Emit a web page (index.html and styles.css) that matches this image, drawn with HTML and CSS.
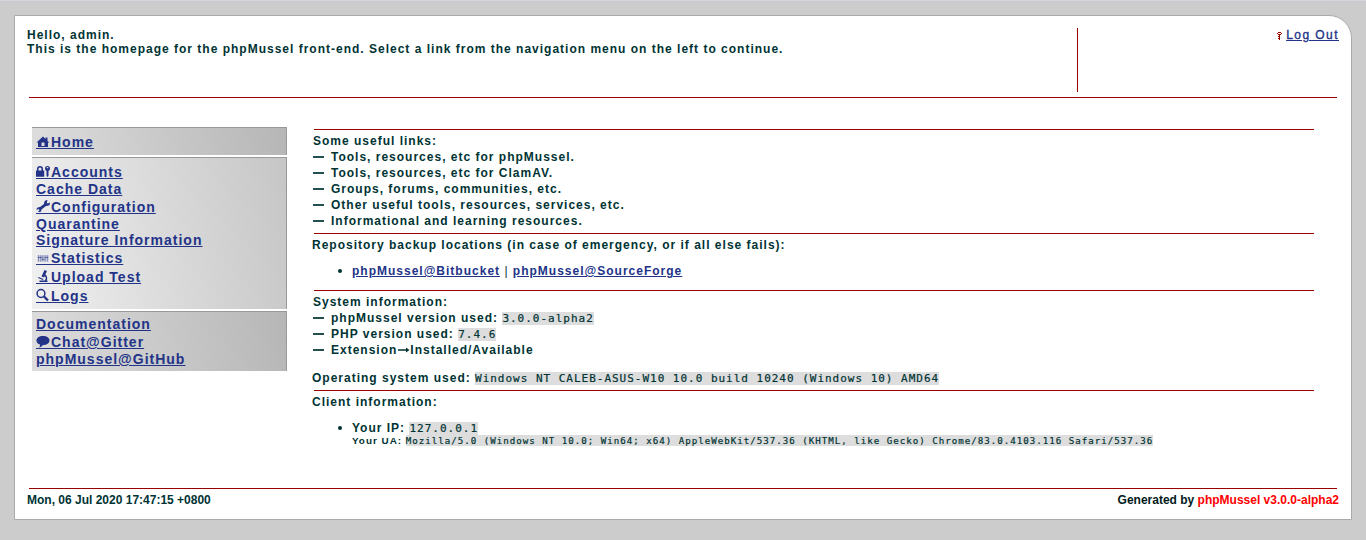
FILE: index.html
```html
<!DOCTYPE html>
<html lang="en">
<head>
<meta charset="utf-8">
<title>phpMussel</title>
<link rel="stylesheet" href="styles.css">
</head>
<body>
<div class="card">
  <header class="top">
    <div class="greeting"><span>Hello, admin.</span><br><span>This is the homepage for the phpMussel front-end. Select a link from the navigation menu on the left to continue.</span></div>
    <div class="session"><svg class="key" viewBox="0 0 5 8" shape-rendering="crispEdges"><path d="M1 0h3v1h1v1H4v1H3v1h0v4H2V7H1V6h1V5H1V4h1V3H1V2H0V1h1z"/><path class="hole" d="M1 1h3v1H1z"/></svg><a href="#">Log Out</a></div>
  </header>
  <main class="main">
    <nav class="nav">
      <div class="box box-dark home">
        <a class="row" href="#"><svg class="ico" viewBox="0 0 15 14"><path d="M7 2.500 9.500 5V3.500h2V7l2 1.500H12V13H2V8.500H.5zM5.500 8.500V12h3V8.500z"/></svg>Home</a>
      </div>
      <div class="box box-light">
        <a class="row h17" href="#"><svg class="ico" viewBox="0 0 15 14"><path d="M0 6.500h1V5Q1 2 4 2t3 3v1.500h1.200v6.300H0zm2.500 0h3V5Q5.500 3.500 4 3.500T2.500 5z"/><path d="M11.500 2Q14 2 14 4.500 14 6 12.500 7v5l-1 1-1-1V7Q9 6 9 4.500 9 2 11.500 2zm-.7 1v1.300h1.400V3z"/></svg>Accounts</a>
        <a class="row h18" href="#">Cache Data</a>
        <a class="row h17" href="#"><svg class="ico" viewBox="0 0 15 14"><path d="M11.500 1 10.800 3.700l1 .8L14 3.500Q14.500 7 10 7l-4.500 3.500Q5.500 13.500 2 13l1.500-2-1-1L.5 11Q.5 8 4 8L8 5Q8 1 11.500 1z"/></svg>Configuration</a>
        <a class="row h16" href="#">Quarantine</a>
        <a class="row h18" href="#">Signature Information</a>
        <a class="row h19" href="#"><svg class="ico wide" viewBox="0 0 16 14"><path class="thin" d="M2.500 5v7M4.500 5v7M6.500 5v7M8.500 5v7M10.500 5v7M12.500 5v7M2 7.500h5M6 9.500h3M9 7.500h4"/></svg>Statistics</a>
        <a class="row h19" href="#"><svg class="ico" viewBox="0 0 15 14"><path d="M8.500 1 11 2 8 8.500 5.500 7.500zM2.500 8l5 2-.5 1-5-2zM3.500 11.500h8V13h-8z"/><path class="line" d="M8.500 6q3.500 2 1 6"/></svg>Upload Test</a>
        <a class="row h17" href="#"><svg class="ico" viewBox="0 0 15 14"><circle class="line" cx="5" cy="5.500" r="3.900"/><path class="line heavy" d="m8 8.500 4 4"/></svg>Logs</a>
      </div>
      <div class="box box-dark docs">
        <a class="row h18" href="#">Documentation</a>
        <a class="row h17" href="#"><svg class="ico" viewBox="0 0 15 14"><path d="M7 2c4 0 6.500 2 6.500 4.500S11 11 7 11q-1.500 2-4 2.500Q4.500 12 4 10.500 .5 9.500.5 6.500C.5 4 3 2 7 2z"/></svg>Chat@Gitter</a>
        <a class="row h17" href="#">phpMussel@GitHub</a>
      </div>
    </nav>
    <div class="content">
      <section class="sec links">
        <div>Some useful links:</div>
        <div class="item"><i class="dash"></i>Tools, resources, etc for phpMussel.</div>
        <div class="item"><i class="dash"></i>Tools, resources, etc for ClamAV.</div>
        <div class="item"><i class="dash"></i>Groups, forums, communities, etc.</div>
        <div class="item"><i class="dash"></i>Other useful tools, resources, services, etc.</div>
        <div class="item"><i class="dash"></i>Informational and learning resources.</div>
      </section>
      <section class="sec repos">
        <div class="lead">Repository backup locations (in case of emergency, or if all else fails):</div>
        <ul><li><a href="#">phpMussel@Bitbucket</a> <span class="bar">|</span> <a href="#">phpMussel@SourceForge</a></li></ul>
      </section>
      <section class="sec system">
        <div>System information:</div>
        <div class="item"><i class="dash"></i><span>phpMussel version used: <code>3.0.0-alpha2</code></span></div>
        <div class="item"><i class="dash"></i><span>PHP version used: <code>7.4.6</code></span></div>
        <div class="item"><i class="dash"></i>Extension<svg class="arrow" viewBox="0 0 13 8"><path d="M1 3.300h8V1.500l3.500 2.500L9 6.500V4.700H1z"/></svg>Installed/Available</div>
        <div class="os">Operating system used: <code>Windows NT CALEB-ASUS-W10 10.0 build 10240 (Windows 10) AMD64</code></div>
      </section>
      <section class="sec client">
        <div class="lead">Client information:</div>
        <ul><li>Your IP: <code>127.0.0.1</code></li></ul>
        <div class="ua">Your UA: <code>Mozilla/5.0 (Windows NT 10.0; Win64; x64) AppleWebKit/537.36 (KHTML, like Gecko) Chrome/83.0.4103.116 Safari/537.36</code></div>
      </section>
    </div>
  </main>
  <footer class="foot"><span>Mon, 06 Jul 2020 17:47:15 +0800</span><span class="by">Generated by <b>phpMussel v3.0.0-alpha2</b></span></footer>
</div>
</body>
</html>
```
FILE: styles.css
```css
* { box-sizing: border-box; }
body {
  margin: 0;
  height: 540px;
  padding: 14px 14px 0;
  border-top: 1px solid #d4d4dc;
  background: #ccc;
  color: #033;
  font: bold 12px/16px "Liberation Sans", Arial, sans-serif;
  letter-spacing: 1px;
  white-space: nowrap;
  overflow: hidden;
}
a { color: #238; text-decoration: underline; }
.card {
  display: flex;
  flex-direction: column;
  height: 505px;
  padding: 12px 12px 0;
  border: 1px solid #aaa;
  border-top-right-radius: 23px;
  background: #fff;
}
.top {
  display: flex;
  height: 70px;
  margin: 0 2px;
  border-bottom: 1px solid #900;
  line-height: 14px;
}
.greeting { width: 1048px; margin-left: -2px; }
.session {
  display: flex;
  flex: 1;
  align-items: flex-start;
  justify-content: flex-end;
  height: 64px;
  margin: 0 -2px 0 2px;
  border-left: 1px solid #900;
}
.session a { font-weight: normal; letter-spacing: 1.450px; -webkit-text-stroke: .35px; }
.key { width: 5px; height: 8px; margin: 4px 4px 0 0; fill: #900; }
.hole { fill: #fff; }
.main { display: flex; height: 390px; padding: 29px 0 0 5px; }
.nav { display: flex; flex-direction: column; gap: 2px; width: 255px; font-size: 14px; }
.box { border: solid #999; border-width: 1px 1px 0 0; padding-left: 4px; }
.box-dark { background: linear-gradient(80deg, #ddd, #b6b6b6); }
.box-light { height: 152px; padding-top: 6px; background: linear-gradient(80deg, #f0f0f0, #c6c6c6); }
.home { height: 28px; padding-top: 6px; }
.docs { height: 60px; padding-top: 4px; }
.row { display: flex; align-items: flex-start; width: max-content; height: 17px; line-height: 17px; }
.h16 { height: 16px; }
.h17 { height: 17px; }
.h18 { height: 18px; }
.h19 { height: 19px; }
.ico { width: 15px; height: 15px; border-bottom: 1px solid #238; fill: #238; fill-rule: evenodd; }
.thin { fill: none; stroke: #238; stroke-width: .65; }
.line { fill: none; stroke: #238; stroke-width: 1.5; }
.heavy { stroke-width: 2.4; }
.content { width: 1000px; margin: 2px 0 0 27px; }
.sec { border-top: 1px solid #900; padding-top: 3px; }
.sec > * { margin-left: -1px; }
.sec > .lead, .sec > .os { margin-left: -2px; }
.links { height: 104px; }
.repos { height: 57px; }
.system { height: 100px; }
.item { display: flex; height: 16px; }
.dash { width: 11px; height: 2px; margin: 7px 7px 0 0; background: #234f4f; }
.arrow { width: 13px; height: 8px; margin: 4px 0 0; fill: #033; }
.os { margin-top: 12px; }
ul { padding: 0 0 0 39px; list-style: none; }
.sec > ul { margin: 10px 0 0 -1px; }
li { display: block; }
.bar { font-weight: normal; }
li::before {
  content: "";
  display: inline-block;
  width: 4px;
  height: 4px;
  margin: 0 10px 2px -14px;
  border-radius: 50%;
  background: #033;
}
code { background: #ddd; font: normal 11px/14px "DejaVu Sans Mono", monospace; -webkit-text-stroke: .2px; }
.os code { letter-spacing: .985px; }
.sec > .ua { margin: -2px 0 0 38px; font-size: 9.900px; line-height: 14px; }
.ua code { padding: 1px 0 0; font-size: 9.130px; line-height: 12px; letter-spacing: 1.005px; }
.foot {
  display: flex;
  justify-content: space-between;
  margin: 0 2px;
  padding-top: 3px;
  border-top: 1px solid #900;
  letter-spacing: 0;
}
.foot span { margin: 0 -2px; }
.by { color: #001a1a; }
.by b { color: #f00; }
```
